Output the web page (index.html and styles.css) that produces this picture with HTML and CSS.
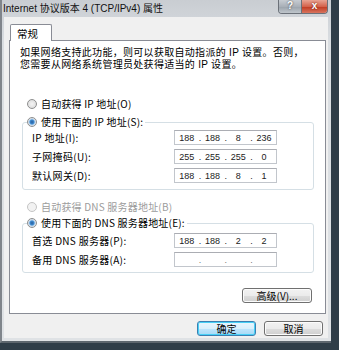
FILE: index.html
```html
<!DOCTYPE html>
<html lang="zh-CN">

<head>
    <meta charset="UTF-8">
    <meta name="viewport" content="width=device-width, initial-scale=1.0">
    <title>Internet 协议版本 4 (TCP/IPv4) 属性</title>
    <link rel="stylesheet" href="styles.css">
</head>

<body>
    <div class="window">
        <div class="titlebar">
            <span class="title">Internet 协议版本 4 (TCP/IPv4) 属性</span>
            <div class="caption-btns">
                <span class="cap-help">?</span>
                <span class="cap-close">x</span>
            </div>
        </div>
        <div class="client">
            <div class="tabs">
                <div class="tab">常规</div>
            </div>
            <div class="panel">
                <p class="desc">如果网络支持此功能，则可以获取自动指派的 IP 设置。否则，</p>
                <p class="desc">您需要从网络系统管理员处获得适当的 IP 设置。</p>

                <div class="radio-row first">
                    <span class="radio"></span>自动获得 IP 地址(O)
                </div>
                <fieldset class="group">
                    <legend class="radio-row">
                        <span class="radio checked"></span>使用下面的 IP 地址(S):
                    </legend>
                    <div class="field">
                        <label>IP 地址(I):</label>
                        <div class="ip">
                            <span class="oct">188</span><span class="dot">.</span>
                            <span class="oct">188</span><span class="dot">.</span>
                            <span class="oct">8</span><span class="dot">.</span>
                            <span class="oct">236</span>
                        </div>
                    </div>
                    <div class="field">
                        <label>子网掩码(U):</label>
                        <div class="ip">
                            <span class="oct">255</span><span class="dot">.</span>
                            <span class="oct">255</span><span class="dot">.</span>
                            <span class="oct">255</span><span class="dot">.</span>
                            <span class="oct">0</span>
                        </div>
                    </div>
                    <div class="field">
                        <label>默认网关(D):</label>
                        <div class="ip">
                            <span class="oct">188</span><span class="dot">.</span>
                            <span class="oct">188</span><span class="dot">.</span>
                            <span class="oct">8</span><span class="dot">.</span>
                            <span class="oct">1</span>
                        </div>
                    </div>
                </fieldset>

                <div class="radio-row disabled dns-auto">
                    <span class="radio"></span>自动获得 DNS 服务器地址(B)
                </div>
                <fieldset class="group dns">
                    <legend class="radio-row">
                        <span class="radio checked"></span>使用下面的 DNS 服务器地址(E):
                    </legend>
                    <div class="field">
                        <label>首选 DNS 服务器(P):</label>
                        <div class="ip">
                            <span class="oct">188</span><span class="dot">.</span>
                            <span class="oct">188</span><span class="dot">.</span>
                            <span class="oct">2</span><span class="dot">.</span>
                            <span class="oct">2</span>
                        </div>
                    </div>
                    <div class="field">
                        <label>备用 DNS 服务器(A):</label>
                        <div class="ip empty">
                            <span class="oct"></span><span class="dot">.</span>
                            <span class="oct"></span><span class="dot">.</span>
                            <span class="oct"></span><span class="dot">.</span>
                            <span class="oct"></span>
                        </div>
                    </div>
                </fieldset>

                <div class="adv-row">
                    <button class="btn adv">高级(V)...</button>
                </div>
            </div>
            <div class="footer">
                <button class="btn ok">确定</button>
                <button class="btn">取消</button>
            </div>
        </div>
    </div>
</body>

</html>
```

FILE: styles.css
```css
* {
    margin: 0;
    padding: 0;
    box-sizing: border-box;
}

body {
    width: 339px;
    height: 350px;
    background: #2f3d48;
    font-family: "Noto Sans CJK SC", sans-serif;
    font-size: 10px;
    color: #000;
    overflow: hidden;
}

.window {
    width: 331px;
    height: 343px;
    display: flex;
    flex-direction: column;
    background: linear-gradient(#c9cdd2, #d9dde1 40px, #dfe2e5);
    border-left: 2px solid #80858b;
    border-bottom: 2px solid #5d666e;
}

.titlebar {
    height: 17px;
    display: flex;
    justify-content: space-between;
    align-items: flex-start;
}

.title {
    padding: 2px 0 0 1px;
    font-family: "Liberation Sans", "Noto Sans CJK SC", sans-serif;
    font-size: 10px;
    line-height: 13px;
    color: #111;
}

.caption-btns {
    display: flex;
    margin-right: 3px;
    border: 1px solid #6b7179;
    border-top: none;
    border-radius: 0 0 4px 4px;
    overflow: hidden;
}

.cap-help,
.cap-close {
    height: 13px;
    line-height: 12px;
    text-align: center;
    font-family: "Liberation Sans", sans-serif;
    font-weight: bold;
    font-size: 10px;
    color: #fff;
}

.cap-help {
    width: 23px;
    background: linear-gradient(#c7ccd2, #a9b0b8 50%, #9aa2ab 51%, #bfc5cb);
    border-right: 1px solid #6b7179;
    text-shadow: 0 0 2px #333;
}

.cap-close {
    width: 25px;
    background: linear-gradient(#e8a493, #d4634c 50%, #c0391f 51%, #d8745e);
    text-shadow: 0 0 2px #5a0c00;
}

.client {
    flex: 1;
    margin: 0 3px 3px 2px;
    padding: 7px 2px 0 5px;
    background: #f0f0f0;
}

.tabs {
    display: flex;
    padding-left: 1px;
}

.tab {
    position: relative;
    width: 42px;
    height: 17px;
    margin-bottom: -1px;
    padding: 2px 0 0 6px;
    background: #fff;
    border: 1px solid #898c95;
    border-bottom: none;
    border-radius: 2px 2px 0 0;
    font-size: 10.5px;
    line-height: 13px;
}

.panel {
    width: 317px;
    height: 274px;
    padding: 6px 10px;
    background: #fff;
    border: 1px solid #898c95;
}

/* primary font with short metrics keeps the 12px line pitch */
.desc {
    height: 12px;
    line-height: 12px;
    font-family: "Liberation Sans", "Noto Sans CJK SC", sans-serif;
    font-size: 10px;
    letter-spacing: 0.3px;
    white-space: nowrap;
}

.radio-row {
    display: flex;
    align-items: center;
    height: 16px;
    line-height: 16px;
    white-space: nowrap;
    letter-spacing: 0.2px;
}

.radio-row.first {
    margin: 25px 0 0 7px;
}

.radio {
    width: 10px;
    height: 10px;
    margin-right: 4px;
    border: 1px solid #8e8f8f;
    border-radius: 50%;
    background: radial-gradient(circle, #f4f4f4, #d7d7d7);
    flex: none;
}

.radio.checked {
    background: radial-gradient(circle, #2c5d9a 0, #3c8ad0 2px, #b7d3ee 3px, #e8e8e8 4px);
}

.disabled {
    color: #9c9c9c;
}

.disabled .radio {
    border-color: #c4c4c4;
    background: #f2f2f2;
}

.group {
    margin: 2px 1px 0 2px;
    padding: 0 4px 6px;
    border: 1px solid #d5dfe5;
    border-radius: 3px;
}

.group legend {
    padding-right: 2px;
}

.group.dns {
    margin-top: 0;
    padding-top: 2px;
    padding-bottom: 5px;
}

.field {
    display: flex;
    align-items: center;
    height: 15px;
    margin: 0 0 4px 5px;
}

.field:last-child {
    margin-bottom: 0;
}

.field label {
    width: 142px;
    white-space: nowrap;
    letter-spacing: 0.3px;
}

.ip {
    width: 103px;
    height: 15px;
    display: flex;
    align-items: center;
    border: 1px solid #c2c6cc;
    border-top-color: #abadb3;
    background: #fff;
    font-family: "Liberation Sans", sans-serif;
    font-size: 9px;
    color: #222;
}

.oct {
    flex: 1;
    text-align: center;
}

.dot {
    width: 2px;
    text-align: center;
}

.ip.empty .dot {
    color: #777;
}

.dns-auto {
    margin: 9px 0 0 7px;
}

.adv-row {
    display: flex;
    justify-content: flex-end;
    margin: 15px 3px 0 0;
}

.btn {
    height: 15px;
    font-family: "Noto Sans CJK SC", sans-serif;
    font-size: 10px;
    line-height: 12px;
    color: #000;
    border: 1px solid #707070;
    border-radius: 3px;
    background: linear-gradient(#f2f2f2, #ebebeb 50%, #dddddd 51%, #cfcfcf);
    box-shadow: inset 0 0 0 1px #fcfcfc;
}

.btn.adv {
    width: 70px;
}

.footer {
    display: flex;
    justify-content: flex-end;
    gap: 8px;
    padding: 7px 3px 0 0;
}

.footer .btn {
    width: 59px;
}

.btn.ok {
    border-color: #3c7fb1;
    background: linear-gradient(#eaf6fd, #d9f0fc 50%, #bee6fd 51%, #a7d9f5);
    box-shadow: inset 0 0 0 1px #48d0f6;
}
```
